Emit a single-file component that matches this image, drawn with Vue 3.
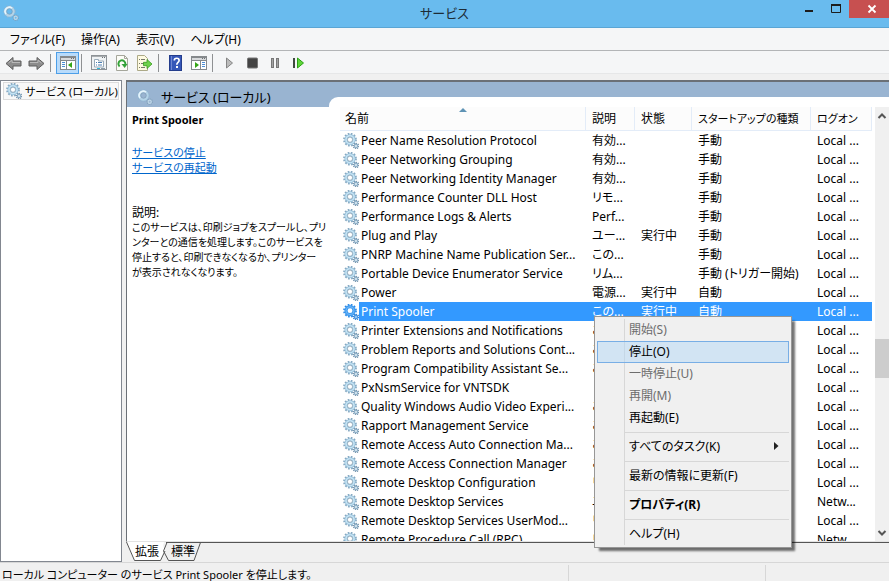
<script setup>
import { ref } from 'vue'

const selected = ref('Print Spooler')

const columns = ['説明', '状態', 'スタートアップの種類', 'ログオン']

const services = [
  ['Peer Name Resolution Protocol', '有効...', '', '手動', 'Local ...'],
  ['Peer Networking Grouping', '有効...', '', '手動', 'Local ...'],
  ['Peer Networking Identity Manager', '有効...', '', '手動', 'Local ...'],
  ['Performance Counter DLL Host', 'リモ...', '', '手動', 'Local ...'],
  ['Performance Logs & Alerts', 'Perf...', '', '手動', 'Local ...'],
  ['Plug and Play', 'ユー...', '実行中', '手動', 'Local ...'],
  ['PNRP Machine Name Publication Ser...', 'この...', '', '手動', 'Local ...'],
  ['Portable Device Enumerator Service', 'リム...', '', '手動 (トリガー開始)', 'Local ...'],
  ['Power', '電源...', '実行中', '自動', 'Local ...'],
  ['Print Spooler', 'この...', '実行中', '自動', 'Local ...'],
  ['Printer Extensions and Notifications', 'この...', '', '', 'Local ...'],
  ['Problem Reports and Solutions Cont...', 'この...', '', '', 'Local ...'],
  ['Program Compatibility Assistant Se...', 'この...', '', '', 'Local ...'],
  ['PxNsmService for VNTSDK', '', '', '', 'Local ...'],
  ['Quality Windows Audio Video Experi...', 'この...', '', '', 'Local ...'],
  ['Rapport Management Service', 'この...', '', '', 'Local ...'],
  ['Remote Access Auto Connection Ma...', 'この...', '', '', 'Local ...'],
  ['Remote Access Connection Manager', 'この...', '', '', 'Local ...'],
  ['Remote Desktop Configuration', 'リモ...', '', '', 'Local ...'],
  ['Remote Desktop Services', 'ユー...', '', '', 'Netw...'],
  ['Remote Desktop Services UserMod...', 'リモ...', '', '', 'Local ...'],
  ['Remote Procedure Call (RPC)', 'リモ...', '', '', 'Netw...'],
]

const menus = ['ファイル(F)', '操作(A)', '表示(V)', 'ヘルプ(H)']

const contextMenu = [
  { label: '開始(S)', disabled: true },
  { label: '停止(O)', hot: true },
  { label: '一時停止(U)', disabled: true },
  { label: '再開(M)', disabled: true },
  { label: '再起動(E)' },
  null,
  { label: 'すべてのタスク(K)', sub: true },
  null,
  { label: '最新の情報に更新(F)' },
  null,
  { label: 'プロパティ(R)', bold: true },
  null,
  { label: 'ヘルプ(H)' },
]
</script>

<template>
  <div class="window">
    <svg class="defs" aria-hidden="true">
      <symbol id="gear" viewBox="0 0 16 16">
        <circle cx="7" cy="6.700" r="5.900" fill="none" stroke="#86a9c2" stroke-width="2" stroke-dasharray="1.700 1.400" />
        <circle cx="7" cy="6.700" r="4" fill="none" stroke="#93bdd8" stroke-width="3" />
        <circle cx="7" cy="6.700" r="4" fill="none" stroke="#c6e4f4" stroke-width="1.600" />
        <circle cx="7" cy="6.700" r="2.600" fill="#fff" stroke="#7692a8" stroke-width="0.700" />
        <circle cx="13" cy="13" r="2.500" fill="none" stroke="#7896ae" stroke-width="1.600" stroke-dasharray="1.100 0.800" />
        <circle cx="13" cy="13" r="1.600" fill="#e2eff6" stroke="#8fb0c8" stroke-width="1.200" />
      </symbol>
      <symbol id="gear-soft" viewBox="0 0 16 16">
        <circle cx="6.500" cy="6.500" r="5.400" fill="none" stroke="#8fb4d0" stroke-width="1.600" stroke-dasharray="1.700 1.400" />
        <circle cx="6.500" cy="6.500" r="4" fill="none" stroke="#b4d4e8" stroke-width="2.400" />
        <path d="M3 9a4.200 4.200 0 0 1 6-5.800" fill="none" stroke="#e6f5fc" stroke-width="1.600" />
        <circle cx="6.500" cy="6.500" r="2.800" fill="none" stroke="#7793ad" stroke-width="0.600" />
        <circle cx="12.700" cy="12.700" r="2.500" fill="none" stroke="#7f9db8" stroke-width="1.400" stroke-dasharray="1.100 0.800" />
        <circle cx="12.700" cy="12.700" r="1.600" fill="none" stroke="#bfd7e7" stroke-width="1.200" />
      </symbol>
      <symbol id="gear-hot" viewBox="0 0 16 16">
        <circle cx="7" cy="6.700" r="5.900" fill="none" stroke="#2e8be6" stroke-width="2" stroke-dasharray="1.700 1.400" />
        <circle cx="7" cy="6.700" r="4" fill="none" stroke="#3f9bf0" stroke-width="3.200" />
        <circle cx="7" cy="6.700" r="4" fill="none" stroke="#6db6f7" stroke-width="1" />
        <circle cx="13" cy="13" r="2.500" fill="none" stroke="#3d84cf" stroke-width="1.600" stroke-dasharray="1.100 0.800" />
        <circle cx="13" cy="13" r="1.600" fill="#a5d0f7" stroke="#4a97e4" stroke-width="1.200" />
      </symbol>
    </svg>

    <header class="titlebar">
      <svg class="gear app-icon"><use href="#gear-soft" /></svg>
      <h1>サービス</h1>
      <div class="controls">
        <button aria-label="最小化"><svg width="10" height="12"><rect x="1" y="7" width="8" height="2" fill="#1c1c1c" /></svg></button>
        <button aria-label="最大化"><svg width="10" height="12"><path d="M.5 3v6.500h9V3" fill="none" stroke="#1c1c1c" /><rect y="1" width="10" height="2" fill="#1c1c1c" /></svg></button>
        <button class="close" aria-label="閉じる"><svg width="10" height="12"><path d="M1.500 2.500l7 7m0-7l-7 7" stroke="#fff" stroke-width="1.800" /></svg></button>
      </div>
    </header>

    <nav class="menubar">
      <button v-for="m in menus" :key="m">{{ m }}</button>
    </nav>

    <div class="toolbar">
      <button aria-label="戻る">
        <svg width="17" height="15"><path d="M1 7.500L8 1.500V5h8v5H8v3.500z" fill="#8c8c8c" stroke="#5e5e5e" /><path d="M3.500 7L7 4V6.500h8" fill="none" stroke="#b9b9b9" /></svg>
      </button>
      <button aria-label="進む">
        <svg width="17" height="15"><path d="M16 7.500L9 1.500V5H1v5h8v3.500z" fill="#8c8c8c" stroke="#5e5e5e" /><path d="M13.500 7L10 4V6.500H2" fill="none" stroke="#b9b9b9" /></svg>
      </button>
      <i class="sep"></i>
      <button class="pressed" aria-label="コンソール ツリーの表示">
        <svg width="16" height="14"><rect x=".5" y=".5" width="15" height="13" fill="#fff" stroke="#85898c" /><path d="M1 1.500h14M1 4.500h14M6.500 5v8" stroke="#85898c" /><path d="M1 3h14" stroke="#d8dadc" stroke-width="2" /><path d="M11 2.500h1M13 2.500h1" stroke="#6d7174" /><path d="M2 6.500h3M2 8.500h3M2 10.500h3" stroke="#4d8fd6" /><path d="M12 6v6L8 9z" fill="#35a516" /></svg>
      </button>
      <i class="sep"></i>
      <button aria-label="プロパティ">
        <svg width="16" height="16"><rect x=".5" y=".5" width="15" height="14" fill="#eff2f4" stroke="#8d9296" /><path d="M1 1.500h14" stroke="#a9adb0" /><path d="M11 2.500h1M13 2.500h1" stroke="#6d7174" /><path d="M3.500 12V4.500h4v1.500h5V12z" fill="#fff" stroke="#9aabb9" /><path d="M5 7.500h1M7 7.500h4M5 10h1M7 10h4" stroke="#4c7fb3" /><path d="M6 13.500h3" stroke="#2bb4d8" /><path d="M10 13.500h4" stroke="#8c9aa6" /></svg>
      </button>
      <button aria-label="最新の情報に更新">
        <svg width="14" height="16"><path d="M1.500.5h8l3 3v12h-11z" fill="#fcfcf7" stroke="#a5a69b" /><path d="M9.500.5v3h3" fill="none" stroke="#a5a69b" /><path d="M4.600 11.500a3.500 3.500 0 1 1 5.800-2.500" fill="none" stroke="#33a238" stroke-width="2" /><path d="M6.500 9h6l-2.800 4z" fill="#33a238" /></svg>
      </button>
      <button aria-label="一覧のエクスポート">
        <svg width="17" height="16"><path d="M1.500.5h7l3 3v12h-10z" fill="#fffbe2" stroke="#aca987" /><path d="M3 4.500h1M5 4.500h4M3 8.500h1M5 8.500h3M3 12.500h1M5 12.500h4" stroke="#77786b" /><path d="M7.500 7.300h3.500V4.500l5 4.500-5 4.500v-2.800H7.500z" fill="#6fd24a" stroke="#3a9c20" stroke-width=".8" /></svg>
      </button>
      <i class="sep"></i>
      <button aria-label="ヘルプ">
        <svg width="14" height="16"><rect x=".5" y=".5" width="12" height="15" fill="#3657b8" stroke="#243d8c" /><path d="M2.500 1v14" stroke="#7188d2" /><path d="M5.300 5.500c0-3 4.800-3 4.800 0 0 2-2.300 2-2.300 4.200" fill="none" stroke="#fff" stroke-width="1.700" /><rect x="7" y="11" width="2" height="2" fill="#fff" /></svg>
      </button>
      <button aria-label="操作ウィンドウの表示">
        <svg width="16" height="14"><rect x=".5" y=".5" width="15" height="13" fill="#fff" stroke="#85898c" /><path d="M1 1.500h14M1 4.500h14M9.500 5v8" stroke="#85898c" /><path d="M1 3h14" stroke="#d8dadc" stroke-width="2" /><path d="M11 2.500h1M13 2.500h1" stroke="#6d7174" /><path d="M11 6.500h3M11 8.500h3M11 10.500h3" stroke="#4d8fd6" /><path d="M4 6v6l4-3z" fill="#35a516" /></svg>
      </button>
      <i class="sep"></i>
      <button aria-label="サービスの開始">
        <svg width="9" height="12"><path d="M1.500 1v10l6-5z" fill="#bcbcbc" stroke="#858585" /></svg>
      </button>
      <button aria-label="サービスの停止">
        <svg width="11" height="12"><rect x=".5" y="1" width="10" height="10" rx="1" fill="#444" stroke="#777" /></svg>
      </button>
      <button aria-label="サービスの一時停止">
        <svg width="9" height="12"><rect x=".5" y="1.500" width="2" height="9" fill="#a3a3a3" stroke="#777" /><rect x="5.500" y="1.500" width="2" height="9" fill="#a3a3a3" stroke="#777" /></svg>
      </button>
      <button aria-label="サービスの再起動">
        <svg width="13" height="12"><rect x="1" y="1" width="2" height="10" fill="#3f4a3f" /><path d="M5.500 1v10l6-5z" fill="#5fd53a" stroke="#2ba214" /></svg>
      </button>
    </div>

    <main class="body">
      <aside class="tree">
        <a href="#" class="node"><svg class="gear"><use href="#gear" /></svg><span>サービス (ローカル)</span></a>
      </aside>

      <section class="pane">
        <div class="content">
          <div class="detail">
            <h2 class="band"><svg class="gear"><use href="#gear-soft" /></svg>サービス (ローカル)</h2>
            <div class="info">
              <h3>{{ selected }}</h3>
              <p class="links">
                <a href="#">サービスの停止</a><br />
                <a href="#">サービスの再起動</a>
              </p>
              <p class="caption">説明:</p>
              <p class="desc">このサービスは、印刷ジョブをスプールし、プリ<br />ンターとの通信を処理します。このサービスを<br />停止すると、印刷できなくなるか、プリンター<br />が表示されなくなります。</p>
            </div>
          </div>

          <div class="list-wrap">
            <div class="list">
              <div class="table-box">
                <table>
                  <colgroup>
                    <col class="c-icon" /><col /><col class="c-desc" /><col class="c-state" /><col class="c-start" /><col class="c-logon" />
                  </colgroup>
                  <thead>
                    <tr>
                      <th colspan="2">名前<span class="sort"></span></th>
                      <th v-for="c in columns" :key="c" :class="{ kana: c.length > 3 }">{{ c }}</th>
                    </tr>
                  </thead>
                  <tbody>
                    <tr v-for="s in services" :key="s[0]" :class="{ selected: s[0] === selected }" @click="selected = s[0]">
                      <td class="icon"><svg class="gear"><use :href="s[0] === selected ? '#gear-hot' : '#gear'" /></svg></td>
                      <td v-for="(v, i) in s" :key="i">{{ v }}</td>
                    </tr>
                  </tbody>
                </table>
              </div>
              <div class="scrollbar">
                <svg width="14" height="17"><path d="M3.500 11l3.500-3.500L10.500 11" fill="none" stroke="#555" stroke-width="2" /></svg>
                <div class="track"><div class="thumb"></div></div>
                <svg width="14" height="17"><path d="M3.500 7L7 10.500 10.500 7" fill="none" stroke="#555" stroke-width="2" /></svg>
              </div>
            </div>
          </div>
        </div>

        <div class="tabs">
          <button class="tab active"><svg width="42" height="19"><path d="M0 0l8 18.500h27L39.500 8 37 4l1-4z" fill="#fff" /><path d="M.5 0l8 18.500h26L39 9" fill="none" stroke="#555" /></svg><span>拡張</span></button>
          <button class="tab"><svg width="40" height="19"><path d="M3 .5L-.5 9l5 9.500H30L36.500.5" fill="none" stroke="#555" /></svg><span>標準</span></button>
          <i class="rule"></i>
        </div>
      </section>
    </main>

    <footer class="status">
      <span class="message">ローカル コンピューター のサービス Print Spooler を停止します。</span>
      <span class="cell wide"></span>
      <span class="cell"></span>
    </footer>

    <div class="context" role="menu">
      <template v-for="(it, i) in contextMenu" :key="i">
        <hr v-if="!it" />
        <button v-else role="menuitem" :disabled="it.disabled" :class="{ hot: it.hot, bold: it.bold }">
          {{ it.label }}<svg v-if="it.sub" width="5" height="8"><path d="M0 0l4.500 4L0 8z" fill="#222" /></svg>
        </button>
      </template>
    </div>
  </div>
</template>

<style>
body {
  margin: 0;
}
</style>

<style scoped>
* {
  box-sizing: border-box;
}
.window {
  display: flex;
  flex-direction: column;
  height: 100vh;
  overflow: hidden;
  position: relative;
  background: #f0f0f0;
  color: #000;
  font-family: "Noto Sans", "Noto Sans CJK JP", sans-serif;
  font-size: 12px;
  line-height: 15px;
  font-feature-settings: "palt";
  white-space: nowrap;
}
button {
  font: inherit;
  font-feature-settings: inherit;
  color: inherit;
  background: none;
  border: 0;
  padding: 0;
  margin: 0;
}
h1, h2, h3, p {
  margin: 0;
  font-weight: 400;
}
.defs {
  position: absolute;
  width: 0;
  height: 0;
}
.gear {
  width: 16px;
  height: 16px;
  flex: none;
  display: block;
}
.titlebar {
  display: grid;
  grid-template-columns: 1fr auto 1fr;
  height: 28px;
  background: #69bbee;
  border-bottom: 1px solid #5aa5d4;
}
.app-icon {
  margin: 5px 0 0 3px;
}
.titlebar h1 {
  font-size: 13px;
  line-height: 27px;
  color: #1d2b36;
}
.controls {
  display: flex;
  justify-content: flex-end;
  height: 18px;
}
.controls button {
  width: 27px;
  display: grid;
  place-items: center;
}
.controls .close {
  width: 40px;
  padding-left: 6px;
  background: #c75050;
}
.menubar {
  display: flex;
  gap: 16px;
  height: 23px;
  padding-left: 10px;
  background: #f5f6f7;
  border-bottom: 1px solid #b3b5b7;
}
.toolbar {
  display: flex;
  align-items: flex-end;
  height: 23px;
  padding-left: 2px;
  background: #f5f6f7;
  box-shadow: inset 0 -1px #e6e7e8;
}
.toolbar button {
  width: 23px;
  height: 22px;
  display: grid;
  place-items: center;
}
.toolbar .pressed {
  background: #b8dbfb;
  border: 1px solid #4d9fe8;
}
.sep {
  width: 1px;
  height: 18px;
  margin: 0 5px 2px 2px;
  background: #8f9193;
}
.body {
  flex: 1;
  min-height: 0;
  display: flex;
  gap: 4px;
  padding-top: 6px;
}
.tree {
  width: 122px;
  padding: 1px 2px;
  background: #fff;
  border: 1px solid #828790;
}
.node {
  display: flex;
  gap: 3px;
  height: 18px;
  align-items: center;
  padding-left: 2px;
  border: 1px solid #dcdcdc;
  background: #f8f8f8;
  color: #000;
  font-size: 11px;
  text-decoration: none;
}
.pane {
  flex: 1;
  min-width: 0;
  display: flex;
  flex-direction: column;
}
.content {
  flex: 1;
  min-height: 0;
  display: flex;
  background: #fff;
  border-top: 2px solid #6b7076;
  border-left: 1px solid #6b7076;
  border-bottom: 1px solid #e3e3e3;
}
.detail {
  width: 202px;
}
.band {
  display: flex;
  align-items: center;
  gap: 8px;
  height: 25px;
  padding: 5px 0 0 10px;
  background: #99b4d1;
  font-size: 13px;
}
.info {
  position: relative;
  z-index: 1;
  padding: 5px 0 0 5px;
}
.info h3 {
  font-size: 11px;
  font-weight: 700;
}
.links {
  margin-top: 18px;
  font-size: 11px;
}
.links a {
  color: #0066cc;
}
.caption {
  margin-top: 30px;
}
.desc {
  font-size: 10px;
}
.list-wrap {
  flex: 1;
  min-width: 0;
  display: flex;
  padding-top: 15px;
  background: linear-gradient(#99b4d1 25px, #fff 25px);
}
.list {
  flex: 1;
  min-width: 0;
  display: flex;
  gap: 3px;
  padding: 10px 0 0 11px;
  background: #fff;
  border-top-left-radius: 9px;
}
.table-box {
  flex: 1;
  min-width: 0;
  overflow: hidden;
}
table {
  width: 100%;
  table-layout: fixed;
  border-collapse: separate;
  border-spacing: 0;
}
.c-icon { width: 19px; }
.c-desc { width: 49px; }
.c-state { width: 57px; }
.c-start { width: 119px; }
.c-logon { width: 61px; }
th {
  height: 24px;
  padding: 0 0 0 6px;
  text-align: left;
  font-weight: 400;
  background: #fcfcfc;
  border-right: 1px solid #e3ecf8;
  border-bottom: 1px solid #e3ecf8;
}
th.kana {
  font-size: 11px;
}
th:first-child {
  padding-left: 5px;
  position: relative;
}
.sort {
  position: absolute;
  left: 50%;
  top: 1px;
  margin-left: -4px;
  border: 4px solid transparent;
  border-top: 0;
  border-bottom: 4px solid #5f93b5;
}
td {
  height: 19px;
  padding: 0 0 0 6px;
  overflow: hidden;
}
td.icon {
  padding: 0 0 0 3px;
}
td.icon + td {
  padding-left: 2px;
}
.selected td:not(.icon) {
  background: #3399ff;
  color: #fff;
}
.scrollbar {
  width: 14px;
  display: flex;
  flex-direction: column;
  background: #f0f0f0;
}
.track {
  flex: 1;
  padding-top: 215px;
}
.thumb {
  height: 39px;
  background: #cdcdcd;
}
.tabs {
  display: flex;
  height: 20px;
}
.tab {
  width: 38px;
  display: grid;
  text-align: left;
}
.tab svg, .tab span {
  grid-area: 1 / 1;
}
.tab svg {
  overflow: visible;
}
.tab span {
  padding: 2px 0 0 7px;
  z-index: 1;
}
.tab.active span {
  padding-left: 9px;
}
.rule {
  flex: 1;
  margin-left: -36px;
  border-top: 1px solid #555;
}
.status {
  display: flex;
  height: 19px;
  border-top: 1px solid #d7d7d7;
}
.message {
  flex: 1;
  padding: 4px 0 0 2px;
  font-size: 11px;
}
.cell {
  width: 124px;
  margin-top: 2px;
  border-left: 1px solid #d7d7d7;
}
.cell.wide {
  width: 197px;
}
.context {
  position: absolute;
  z-index: 2;
  left: 594px;
  top: 316px;
  width: 198px;
  padding: 2px;
  border: 1px solid #979797;
  background: linear-gradient(90deg, transparent 27px, #d7d7d7 27px, #d7d7d7 28px, transparent 28px) content-box, #f0f0f0;
  box-shadow: 4px 4px 2px -1px rgba(0, 0, 0, 0.55);
}
.context button {
  display: flex;
  align-items: center;
  justify-content: space-between;
  width: 100%;
  height: 22px;
  padding: 0 9px 2px 31px;
  border: 1px solid transparent;
}
.context button:disabled {
  color: #6d6d6d;
}
.context .hot {
  background: rgba(180, 215, 245, 0.5);
  border-color: #78aee5;
}
.context .bold {
  font-weight: 700;
}
.context hr {
  height: 7px;
  margin: 0 0 0 28px;
  border: 0;
  background: linear-gradient(#d7d7d7, #d7d7d7) 0 3px / 100% 1px no-repeat;
}
</style>
